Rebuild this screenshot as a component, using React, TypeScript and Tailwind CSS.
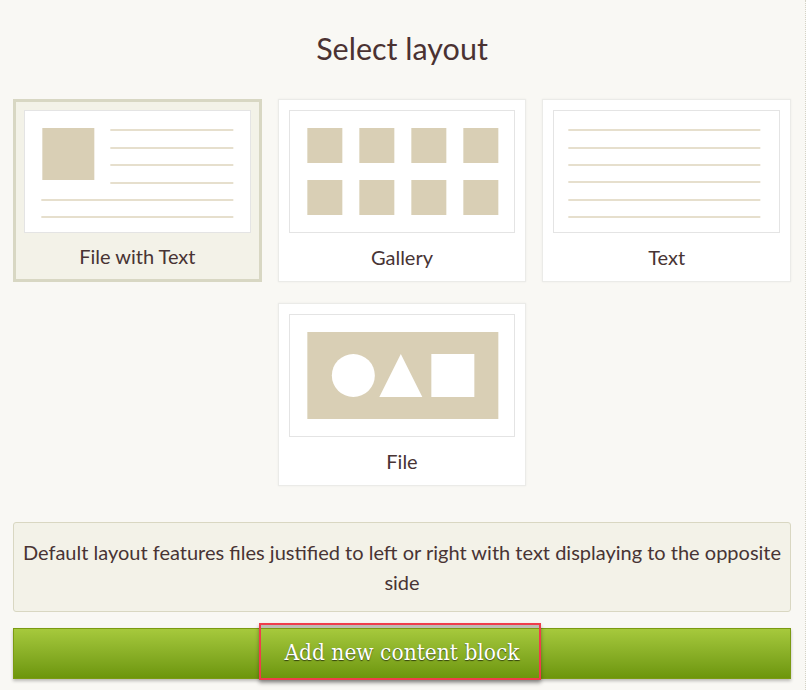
import React from "react";

type Layout = {
  name: string;
  selected?: boolean;
  preview: React.ReactNode;
};

const TAN = "#d9cfb5";
const LINE = "#e6dfcd";

const Line: React.FC<{ x1: number; x2: number; y: number }> = ({ x1, x2, y }) => (
  <rect x={x1} y={y} width={x2 - x1} height={2} fill={LINE} />
);

const FileWithTextPreview = () => (
  <svg viewBox="0 0 224 121" className="w-full h-full">
    <rect x={17} y={17} width={52} height={52} fill={TAN} />
    {[18, 36, 53, 71].map((y) => (
      <Line key={y} x1={85} x2={208} y={y} />
    ))}
    {[88, 105].map((y) => (
      <Line key={y} x1={16} x2={208} y={y} />
    ))}
  </svg>
);

const GalleryPreview = () => (
  <svg viewBox="0 0 224 121" className="w-full h-full">
    {[17, 69].map((y) =>
      [17, 69, 121, 173].map((x) => (
        <rect key={`${x}-${y}`} x={x} y={y} width={35} height={35} fill={TAN} />
      ))
    )}
  </svg>
);

const TextPreview = () => (
  <svg viewBox="0 0 224 121" className="w-full h-full">
    {[18, 36, 53, 70, 88, 105].map((y) => (
      <Line key={y} x1={14} x2={206} y={y} />
    ))}
  </svg>
);

const FilePreview = () => (
  <svg viewBox="0 0 224 121" className="w-full h-full">
    <rect x={17} y={17} width={191} height={87} fill={TAN} />
    <circle cx={63} cy={60.5} r={21.5} fill="#fff" />
    <polygon points="89,82 132,82 110.5,39" fill="#fff" />
    <rect x={141} y={39} width={43} height={43} fill="#fff" />
  </svg>
);

const layouts: Layout[] = [
  { name: "File with Text", selected: true, preview: <FileWithTextPreview /> },
  { name: "Gallery", preview: <GalleryPreview /> },
  { name: "Text", preview: <TextPreview /> },
];

const LayoutCard: React.FC<{ layout: Layout; className?: string }> = ({ layout, className }) => (
  <button
    className={[
      "flex flex-col h-[183px] text-left",
      layout.selected
        ? "border-[3px] border-[#d8d7c3] bg-[#f3f2e8] p-[8px] pb-0"
        : "border border-[#ebebe8] bg-white p-[10px] pb-0 shadow-[0_0_2px_rgba(0,0,0,0.06)]",
      className ?? "",
    ].join(" ")}
  >
    <div className="h-[123px] w-full border border-[#e4e4e4] bg-white">{layout.preview}</div>
    <div className="flex-1 flex items-center justify-center text-[20px] text-[#483434]">
      {layout.name}
    </div>
  </button>
);

export default function App() {
  return (
    <div
      className="min-h-[690px] bg-[#f9f8f4] border-r border-dotted border-[#d5d3c6] w-[806px]"
      style={{ fontFamily: "Lato, 'Open Sans', sans-serif" }}
    >
      <div className="pl-[13px] pr-[14px]">
        <div className="h-[99px] flex items-center justify-center">
          <h1 className="text-[30.5px] text-[#4b3232] leading-none mt-[-2px]">Select layout</h1>
        </div>

        <div className="grid grid-cols-3 gap-x-4 gap-y-[21px]">
          {layouts.map((l) => (
            <LayoutCard key={l.name} layout={l} />
          ))}
          <LayoutCard layout={{ name: "File", preview: <FilePreview /> }} className="col-start-2" />
        </div>

        <div className="mt-[36px] h-[90px] rounded-[3px] border border-[#d9d7c2] bg-[#f3f2e8] flex items-center justify-center px-2 text-center text-[20px] leading-[30px] text-[#483434]">
          Default layout features files justified to left or right with text displaying to the opposite side
        </div>

        <div className="relative mt-[16px] h-[51px] border border-[#7b9a12] bg-gradient-to-b from-[#a6c93c] to-[#6d960b] shadow-[0_2px_3px_rgba(0,0,0,0.25)] flex items-center justify-center">
          <span
            className="text-white text-[22.5px] [text-shadow:0_1px_1px_rgba(0,0,0,0.6)] mt-[-2px]"
            style={{ fontFamily: "'DejaVu Serif Condensed', 'DejaVu Serif', serif" }}
          >
            Add new content block
          </span>
          <div className="absolute left-[245px] top-[-6px] w-[282px] h-[57px] border-2 border-[#ef3d4b] shadow-[0_3px_4px_rgba(0,0,0,0.35)] pointer-events-none">
            <div className="h-[3px] bg-[#bdbdb4]" />
          </div>
        </div>
      </div>
    </div>
  );
}
